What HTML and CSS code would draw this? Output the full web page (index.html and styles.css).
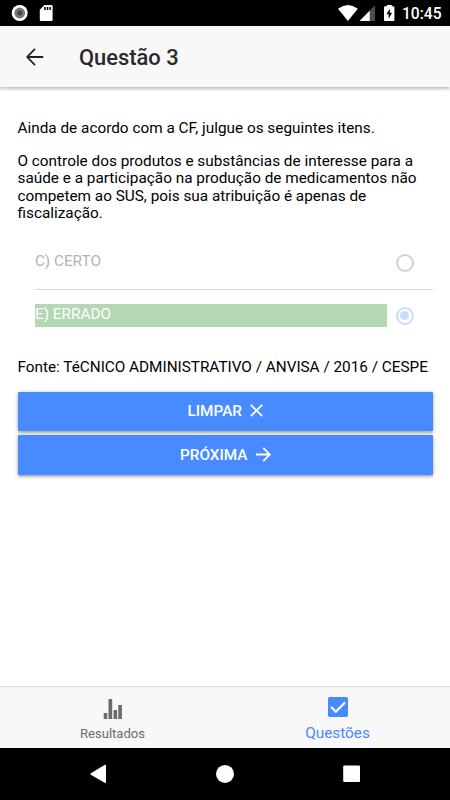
FILE: index.html
```
<!DOCTYPE html>
<html lang="pt-BR">
<head>
    <meta charset="UTF-8">
    <meta name="viewport" content="width=device-width, initial-scale=1.0">
    <title>Questão 3</title>
    <link rel="stylesheet" href="styles.css">
</head>
<body>
    <div class="status-bar">
        <svg class="status-left" width="60" height="26" viewBox="0 0 60 26">
            <circle cx="19.7" cy="13" r="8" fill="#fff"/>
            <circle cx="19.7" cy="13" r="5.4" fill="#777"/>
            <circle cx="19.7" cy="13" r="2.5" fill="#444"/>
            <path d="M44.5 5H51.5Q52.6 5 52.6 6.2V19.7Q52.6 21 51.4 21H41Q39.8 21 39.8 19.7V9.8Z" fill="#fff"/>
            <path d="M44.9 7v3M47.5 7v3M50.1 7v3" stroke="#000" stroke-width="1.5"/>
        </svg>
        <svg class="status-right" width="62" height="26" viewBox="0 0 62 26">
            <path d="M0 8.7Q9.8 1.5 19.8 8.7L9.9 21Z" fill="#fff"/>
            <path d="M37 5.3V21H21.5Z" fill="#4d4d4d"/>
            <path d="M31.7 10.8V21H21.5Z" fill="#fff"/>
            <path d="M48.9 5H53.8V6.3H55.3Q56.4 6.3 56.4 7.5V20Q56.4 21 55.4 21H47Q46 21 46 20V7.5Q46 6.3 47.2 6.3H48.9Z" fill="#fff"/>
            <path d="M51.8 8.8L48.4 14.2H50.7V18.8L54.1 12.8H51.8Z" fill="#000"/>
        </svg>
        <span class="clock">10:45</span>
    </div>

    <header class="toolbar">
        <svg class="back" width="18" height="18" viewBox="0 0 18 18">
            <path d="M9 .9L1.2 9L9 17.1M1.2 9H17.3" fill="none" stroke="#222" stroke-width="1.8"/>
        </svg>
        <h1>Questão 3</h1>
    </header>

    <main class="content">
        <p>Ainda de acordo com a CF, julgue os seguintes itens.</p>
        <p>O controle dos produtos e substâncias de interesse para a saúde e a participação na produção de medicamentos não competem ao SUS, pois sua atribuição é apenas de fiscalização.</p>

        <div class="options">
            <div class="option">
                <span class="label">C) CERTO</span>
                <span class="radio"></span>
            </div>
            <div class="option correct">
                <span class="label">E) ERRADO</span>
                <span class="radio checked"></span>
            </div>
        </div>

        <p class="source">Fonte: TéCNICO ADMINISTRATIVO / ANVISA / 2016 / CESPE</p>

        <button class="button">
            LIMPAR
            <svg width="13" height="13" viewBox="0 0 13 13">
                <path d="M.8 .8L12.2 12.2M12.2 .8L.8 12.2" stroke="#fff" stroke-width="1.8"/>
            </svg>
        </button>
        <button class="button">
            PRÓXIMA
            <svg width="15" height="15" viewBox="0 0 15 15">
                <path d="M7.3 .9L13.8 7.5L7.3 14.1M0 7.5H13.8" fill="none" stroke="#fff" stroke-width="1.8"/>
            </svg>
        </button>
    </main>

    <nav class="tabs">
        <div class="tab">
            <svg width="20" height="22" viewBox="0 0 20 22">
                <path d="M.7 15H4.3V21H.7ZM5.5 1H9.2V21H5.5ZM10.6 12H14.1V21H10.6ZM15.3 7H18.9V21H15.3Z" fill="#6b6b6b"/>
            </svg>
            <span>Resultados</span>
        </div>
        <div class="tab active">
            <svg width="20" height="20" viewBox="0 0 20 20">
                <rect width="20" height="20" rx="1.8" fill="#488aff"/>
                <path d="M3.1 10L7.8 14.7L17 5.4" fill="none" stroke="#fff" stroke-width="2.2"/>
            </svg>
            <span>Questões</span>
        </div>
    </nav>

    <div class="nav-bar">
        <svg width="450" height="52" viewBox="0 0 450 52">
            <path d="M90.8 25.2L104.5 17Q106 16.4 106 18V34Q106 35.4 104.6 34.8L90.8 26.8Q90 26 90.8 25.2Z" fill="#fff"/>
            <circle cx="225" cy="25.9" r="9" fill="#fff"/>
            <rect x="343.2" y="17.4" width="16.8" height="16.6" rx="1" fill="#fff"/>
        </svg>
    </div>
</body>
</html>
```
FILE: styles.css
```
body {
    font-family: Roboto, sans-serif;
    font-size: 15.33px;
    line-height: 17.6px;
    color: #000;
    background-color: #fff;
    margin: 0;
    height: 800px;
    display: flex;
    flex-direction: column;
    overflow: hidden;
}

svg {
    display: block;
    flex-shrink: 0;
}

.status-bar {
    height: 26px;
    background-color: #000;
    display: flex;
    align-items: center;
}

.status-right {
    margin-left: auto;
}

.clock {
    color: #fff;
    font-size: 15.6px;
    font-weight: 500;
    margin: 3px 9px 0 2px;
    width: 39px;
    white-space: nowrap;
}

.toolbar {
    height: 61px;
    background-color: #f8f8f8;
    display: flex;
    align-items: center;
    padding-left: 26px;
    box-shadow: 0 2px 3px rgba(0, 0, 0, 0.25);
}

.toolbar h1 {
    font-size: 21.9px;
    line-height: 26px;
    font-weight: 500;
    color: #2a2a2a;
    margin: 2px 0 0 35px;
}

.content {
    flex: 1;
    padding: 32.5px 17px 0 17.5px;
}

.content p {
    margin: 0 0 15.6px;
}

.options {
    margin: -1px 0 17px 17.5px;
}

.option {
    display: flex;
    height: 51.5px;
    color: #b3b3b3;
    border-bottom: 1px solid #d8d8d8;
}

.option.correct {
    color: #fff;
    border-bottom: none;
}

.label {
    width: 352px;
    height: 23px;
    margin-top: 13.5px;
    line-height: 20px;
}

.correct .label {
    background-color: #b3d8b3;
}

.radio {
    box-sizing: border-box;
    width: 18px;
    height: 18px;
    margin: 16.5px 0 0 8.5px;
    border: 2px solid #d3d3d3;
    border-radius: 50%;
    display: flex;
    align-items: center;
    justify-content: center;
}

.radio.checked {
    border-color: #c8dcff;
}

.radio.checked::after {
    content: "";
    width: 9px;
    height: 9px;
    border-radius: 50%;
    background-color: #c8dcff;
}

.content .source {
    margin-bottom: 15.3px;
    white-space: nowrap;
    letter-spacing: -0.015px;
}

.button {
    display: flex;
    align-items: center;
    justify-content: center;
    gap: 8px;
    width: 100%;
    height: 39.4px;
    margin: 0 0 4.4px;
    padding: 0 0 1px;
    border: none;
    border-radius: 1px;
    background-color: #488aff;
    color: #fff;
    font-family: inherit;
    font-size: 15.33px;
    font-weight: 500;
    box-shadow: 0 2px 2px rgba(0, 0, 0, 0.14), 0 1px 4px rgba(0, 0, 0, 0.3);
}

.tabs {
    box-sizing: border-box;
    height: 62px;
    display: flex;
    background-color: #f8f8f8;
    border-top: 1px solid #dedede;
}

.tab {
    flex: 1;
    display: flex;
    flex-direction: column;
    align-items: center;
    color: #6b6b6b;
    font-size: 13.1px;
    padding-top: 11px;
    gap: 5px;
}

.tab.active {
    color: #488aff;
    font-size: 15.33px;
    padding-top: 10px;
    gap: 8px;
}

.nav-bar {
    height: 52px;
    background-color: #000;
}
```
